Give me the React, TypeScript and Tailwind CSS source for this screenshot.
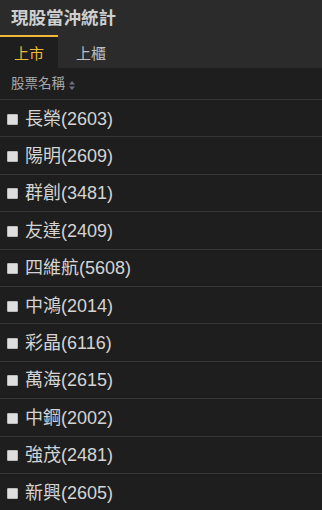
import { useState } from "react";

const stocks = [
  "長榮(2603)",
  "陽明(2609)",
  "群創(3481)",
  "友達(2409)",
  "四維航(5608)",
  "中鴻(2014)",
  "彩晶(6116)",
  "萬海(2615)",
  "中鋼(2002)",
  "強茂(2481)",
  "新興(2605)",
];

const font = { fontFamily: '"Liberation Sans", "Noto Sans CJK TC", sans-serif' };

export default function App() {
  const [tab, setTab] = useState(0);

  return (
    <div className="w-[322px] h-[510px] overflow-hidden bg-[#1e1e1e] text-[#d8d8d8]" style={font}>
      <div className="bg-[#2b2b2b]">
        <div className="h-[35px] flex items-center px-[11px] pt-[1px] text-[17.5px] font-bold text-[#cfcfcf]">現股當沖統計</div>
        <div className="flex h-[33px]">
          {["上市", "上櫃"].map((t, i) => (
            <button
              key={t}
              onClick={() => setTab(i)}
              className={
                (i === 0 ? "w-[58px] " : "w-[66px] ") +
                "pt-[4px] text-[15px] flex items-center justify-center border-t-2 " +
                (tab === i ? "bg-[#1e1e1e] border-[#f0b73a] text-[#f0b73a]" : "border-transparent text-[#bdbdbd]")
              }
            >
              {t}
            </button>
          ))}
        </div>
      </div>

      <div className="h-[32px] flex items-center px-[11px] pt-[2px] text-[13.5px] text-[#a8a8a8] border-b border-[#353535]">
        股票名稱
        <svg width="8" height="11" viewBox="0 0 8 11" className="ml-[3px] mt-[2px]">
          <path d="M4 1 L7 4.5 H1 Z" fill="#6b7385" />
          <path d="M4 10 L7 6.5 H1 Z" fill="#6b7385" />
        </svg>
      </div>

      {stocks.map((s) => (
        <div key={s} className="h-[37.4px] flex items-center px-[7px] pt-[2px] border-b border-[#353535]">
          <span className="w-[11px] h-[11px] bg-[#dedede] border border-[#bbbbbb] rounded-[1px] mr-[7px]" />
          <span className="text-[18px] text-[#d4d4d4]">{s}</span>
        </div>
      ))}
    </div>
  );
}
